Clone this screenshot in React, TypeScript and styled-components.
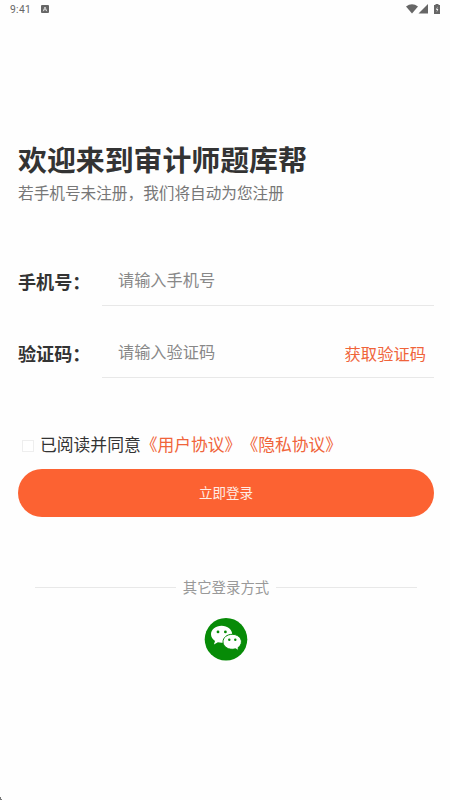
import React from "react";
import styled, { createGlobalStyle } from "styled-components";

const GlobalStyle = createGlobalStyle`
  * { box-sizing: border-box; }
  body {
    margin: 0;
    background: #fefefe;
    font-family: "Noto Sans CJK SC", "Noto Sans", sans-serif;
    text-spacing-trim: space-all;
    color: #333;
  }
`;

const Screen = styled.main`
  position: relative;
  width: 450px;
  height: 800px;
  overflow: hidden;
  display: flex;
  flex-direction: column;
  padding: 0 16px 0 18px;
`;

const StatusBar = styled.header`
  height: 18px;
  margin: 0 -8px;
  display: flex;
  align-items: center;
  color: #666;
  font: 10.3px/18px Roboto, sans-serif;
`;

const Time = styled.span`
  width: 31px;
  padding-top: 1px;
  letter-spacing: 0.3px;
`;

const StatusIcons = styled.svg`
  margin-left: auto;
`;

const Title = styled.h1`
  margin: 119px 0 0;
  height: 43px;
  font-size: 28.9px;
  line-height: 42px;
  font-weight: 700;
  white-space: nowrap;
`;

const Subtitle = styled.p`
  margin: 0;
  height: 24px;
  padding-top: 1px;
  font-size: 15.65px;
  line-height: 24px;
  color: #777;
  white-space: nowrap;
`;

const Form = styled.form`
  margin-top: 54px;
`;

const Field = styled.div`
  height: 72px;
  display: grid;
  grid-template-columns: 84px 1fr;
`;

const Label = styled.label`
  height: 48px;
  font-size: 18.1px;
  line-height: 46px;
  font-weight: 700;
  white-space: nowrap;
`;

const InputLine = styled.div`
  height: 48px;
  padding: 0 8px 0 16px;
  display: flex;
  align-items: center;
  border-bottom: 1px solid #e8e8e8;
`;

const Input = styled.input`
  flex: 1;
  min-width: 0;
  height: 46px;
  padding: 0 0 5px;
  border: 0;
  outline: 0;
  background: transparent;
  font: 16.2px "Noto Sans CJK SC", sans-serif;
  &::placeholder { color: #888; opacity: 1; }
`;

const CodeButton = styled.button`
  padding: 0 0 2px;
  border: 0;
  background: none;
  color: #f0643a;
  font: 16.3px/24px "Noto Sans CJK SC", sans-serif;
  white-space: nowrap;
`;

const Agreement = styled.div`
  margin-top: 24px;
  height: 36px;
  display: flex;
  align-items: center;
  font-size: 16.8px;
  line-height: 36px;
  white-space: nowrap;
`;

const Checkbox = styled.input`
  appearance: none;
  width: 12px;
  height: 12px;
  margin: 3px 6px 0 4px;
  border: 1px solid #eee;
  background: #fff;
`;

const PolicyLink = styled.a`
  color: #f0643a;
`;

const LoginButton = styled.button`
  display: block;
  width: 100%;
  height: 48px;
  margin-top: 7px;
  padding: 0 0 3px;
  border: 0;
  border-radius: 24px;
  background: #fc6232;
  color: #ffece5;
  font: 13.5px/20px "Noto Sans CJK SC", sans-serif;
`;

const Divider = styled.div`
  margin: 59px 17px 0;
  height: 22px;
  display: flex;
  align-items: center;
  gap: 7px;
  color: #999;
  font-size: 14.4px;
  line-height: 22px;
  white-space: nowrap;
  &::before, &::after {
    content: "";
    flex: 1;
    height: 1px;
    background: #e8e8e8;
  }
`;

const WechatButton = styled.button`
  align-self: center;
  width: 44px;
  height: 44px;
  margin-top: 19px;
  padding: 0;
  border: 0;
  background: none;
  svg { display: block; }
`;

const CornerMark = styled.svg`
  position: absolute;
  left: 0;
  bottom: 0;
`;

export default function App() {
  return (
    <>
      <GlobalStyle />
      <Screen>
        <StatusBar>
          <Time>9:41</Time>
          <svg width="8" height="8" viewBox="0 0 8 8">
            <rect width="8" height="8" rx="1" fill="#666" />
            <path d="M2.2 6.2 4 2l1.8 4.2M2.9 4.8h2.2" fill="none" stroke="#eee" strokeWidth=".8" />
          </svg>
          <StatusIcons width="36" height="12" viewBox="0 0 36 12">
            <path d="M0 3.5Q6 -.8 12 3.5L6 10.5Z" fill="#666" />
            <path d="M22 1v9.5h-9.5Z" fill="#666" />
            <path d="M29.5 1h3v1h1.5v9h-6V2h1.5Z" fill="#666" />
            <path d="M31.6 3.5 29.9 6.7h1.2l-.5 2.7 1.7-3.4h-1.2Z" fill="#fff" />
          </StatusIcons>
        </StatusBar>
        <Title>欢迎来到审计师题库帮</Title>
        <Subtitle>若手机号未注册，我们将自动为您注册</Subtitle>
        <Form>
          <Field>
            <Label htmlFor="phone">手机号：</Label>
            <InputLine>
              <Input id="phone" placeholder="请输入手机号" />
            </InputLine>
          </Field>
          <Field>
            <Label htmlFor="code">验证码：</Label>
            <InputLine>
              <Input id="code" placeholder="请输入验证码" />
              <CodeButton type="button">获取验证码</CodeButton>
            </InputLine>
          </Field>
          <Agreement>
            <Checkbox type="checkbox" aria-label="同意协议" />
            <span>已阅读并同意</span>
            <PolicyLink>《用户协议》</PolicyLink>
            <PolicyLink>《隐私协议》</PolicyLink>
          </Agreement>
          <LoginButton type="button">立即登录</LoginButton>
        </Form>
        <Divider>其它登录方式</Divider>
        <WechatButton aria-label="微信登录">
          <svg width="44" height="44" viewBox="0 0 44 44">
            <circle cx="22" cy="22.3" r="21.3" fill="#078b07" />
            <path d="M17.6 8.7C11.6 8.7 7 12.4 7 17.2c0 2.8 1.6 5.1 4 6.7l-1.1 3.5 4-2.1c1.2.3 2.4.5 3.7.5 6 0 10.6-3.8 10.6-8.6s-4.6-8.5-10.6-8.5Z" fill="#fff" />
            <path d="M28.2 17.3c-5.2 0-9.2 3.3-9.2 7.5s4 7.5 9.2 7.5c1.2 0 2.3-.2 3.3-.5l3.4 1.9-.9-3c2.1-1.4 3.4-3.5 3.4-5.9 0-4.2-4-7.5-9.2-7.5Z" fill="#fff" stroke="#078b07" strokeWidth="1" />
            <g fill="#078b07">
              <circle cx="14" cy="14.9" r="1.4" />
              <circle cx="21.4" cy="14.9" r="1.4" />
              <circle cx="25.3" cy="22.7" r="1.2" />
              <circle cx="31.3" cy="22.7" r="1.2" />
            </g>
          </svg>
        </WechatButton>
        <CornerMark width="3" height="4" viewBox="0 0 3 4">
          <path d="M0 1h1v2h1v1H0Z" fill="#777" />
        </CornerMark>
      </Screen>
    </>
  );
}
